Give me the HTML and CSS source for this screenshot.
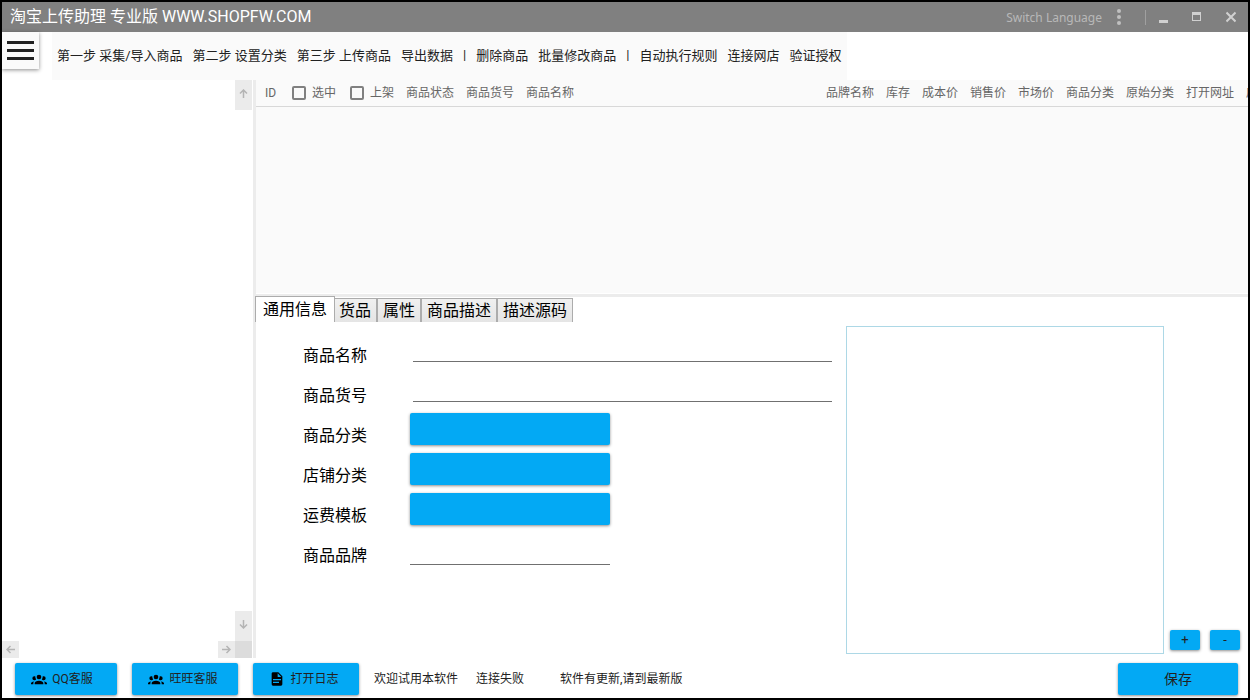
FILE: index.html
```html
<!DOCTYPE html>
<html lang="zh-CN">
<head>
<meta charset="utf-8">
<title>淘宝上传助理 专业版</title>
<link rel="stylesheet" href="styles.css">
</head>
<body>
<div class="window">
  <header class="titlebar">
    <h1 class="title">淘宝上传助理 专业版 WWW.SHOPFW.COM</h1>
    <button class="language">Switch Language</button>
    <button class="caption more" aria-label="更多"><svg width="6" height="18" viewBox="0 0 6 18"><g fill="#c0c0c0"><circle cx="3" cy="3" r="2"/><circle cx="3" cy="9" r="2"/><circle cx="3" cy="15" r="2"/></g></svg></button>
    <span class="divider"></span>
    <button class="caption" aria-label="最小化"><svg width="10" height="12" viewBox="0 0 10 12"><path d="M1 9h9v3H1z" fill="#d0d0d0"/></svg></button>
    <button class="caption" aria-label="最大化"><svg width="10" height="12" viewBox="0 0 10 12"><path d="M0 1h9v9H0zM1 4v5h7V4z" fill="#d0d0d0" fill-rule="evenodd"/></svg></button>
    <button class="caption" aria-label="关闭"><svg width="10" height="12" viewBox="0 0 10 12"><path d="M0.500 1.500l9 9M9.500 1.500l-9 9" stroke="#d0d0d0" stroke-width="2" fill="none"/></svg></button>
  </header>

  <div class="toolbar">
    <button class="hamburger" aria-label="菜单"><svg width="27" height="19" viewBox="0 0 27 19"><path d="M0 0h27v3H0zM0 8h27v3H0zM0 16h27v3H0z" fill="#212121"/></svg></button>
    <nav class="menu">
      <button>第一步 采集/导入商品</button>
      <button>第二步 设置分类</button>
      <button>第三步 上传商品</button>
      <button>导出数据</button>
      <span>|</span>
      <button>删除商品</button>
      <button>批量修改商品</button>
      <span>|</span>
      <button>自动执行规则</button>
      <button>连接网店</button>
      <button>验证授权</button>
    </nav>
  </div>

  <main class="main">
    <aside class="tree">
      <div class="tree-body"></div>
      <div class="vbar">
        <button class="arrow tall" aria-label="向上"><svg width="9" height="9" viewBox="0 0 9 9"><path d="M4.500 9V1M1 4.500L4.500 1L8 4.500"/></svg></button>
        <button class="arrow tall" aria-label="向下"><svg width="9" height="9" viewBox="0 0 9 9"><path d="M4.500 0v8M1 4.500L4.500 8L8 4.500"/></svg></button>
      </div>
      <div class="hbar">
        <button class="arrow" aria-label="向左"><svg width="9" height="9" viewBox="0 0 9 9"><path d="M9 4.500H1M4.500 1L1 4.500L4.500 8"/></svg></button>
        <button class="arrow" aria-label="向右"><svg width="9" height="9" viewBox="0 0 9 9"><path d="M0 4.500h8M4.500 1L8 4.500L4.500 8"/></svg></button>
      </div>
      <div class="corner"></div>
    </aside>

    <section class="content">
      <div class="grid-pane">
        <table class="products">
          <colgroup>
            <col class="c-id"><col class="c-pick"><col class="c-shelf"><col class="c-four"><col class="c-four"><col>
            <col class="c-four"><col class="c-two"><col class="c-three"><col class="c-three"><col class="c-three">
            <col class="c-four"><col class="c-four"><col class="c-four"><col class="c-four">
          </colgroup>
          <thead>
            <tr>
              <th class="first">ID</th>
              <th><label class="check"><input type="checkbox">选中</label></th>
              <th><label class="check"><input type="checkbox">上架</label></th>
              <th>商品状态</th><th>商品货号</th><th>商品名称</th>
              <th>品牌名称</th><th>库存</th><th>成本价</th><th>销售价</th><th>市场价</th>
              <th>商品分类</th><th>原始分类</th><th>打开网址</th><th>店铺分类</th>
            </tr>
          </thead>
        </table>
      </div>

      <div class="tabs" role="tablist">
        <button class="tab active" role="tab" aria-selected="true">通用信息</button>
        <button class="tab" role="tab">货品</button>
        <button class="tab" role="tab">属性</button>
        <button class="tab" role="tab">商品描述</button>
        <button class="tab" role="tab">描述源码</button>
      </div>

      <div class="detail">
        <form class="form">
          <label for="name">商品名称</label><input class="line wide" id="name" type="text">
          <label for="number">商品货号</label><input class="line wide" id="number" type="text">
          <label for="category">商品分类</label><button class="raised" id="category" type="button"></button>
          <label for="shop">店铺分类</label><button class="raised" id="shop" type="button"></button>
          <label for="freight">运费模板</label><button class="raised" id="freight" type="button"></button>
          <label for="brand">商品品牌</label><input class="line" id="brand" type="text">
        </form>
        <div class="preview"></div>
        <div class="zoom">
          <button class="raised small">+</button>
          <button class="raised small">-</button>
        </div>
      </div>
    </section>
  </main>

  <footer class="footer">
    <button class="raised action qq"><svg width="16" height="16" viewBox="0 0 24 24"><path d="M12 5.500A3.500 3.500 0 0 1 15.500 9a3.500 3.500 0 0 1-3.500 3.500A3.500 3.500 0 0 1 8.500 9 3.500 3.500 0 0 1 12 5.500M5 8c.56 0 1.080.15 1.530.42-.15 1.430.27 2.850 1.130 3.960C7.160 13.340 6.160 14 5 14a3 3 0 0 1-3-3 3 3 0 0 1 3-3m14 0a3 3 0 0 1 3 3 3 3 0 0 1-3 3c-1.160 0-2.160-.66-2.660-1.620a5.540 5.540 0 0 0 1.130-3.960c.45-.27.97-.42 1.530-.42M5.500 18.250c0-2.070 2.910-3.750 6.500-3.750s6.500 1.680 6.500 3.750V20h-13v-1.750M0 20v-1.500c0-1.390 1.890-2.560 4.450-2.900-.59.68-.95 1.620-.95 2.650V20H0m24 0h-3.500v-1.750c0-1.030-.36-1.970-.95-2.650 2.560.34 4.450 1.510 4.450 2.900V20z"/></svg>QQ客服</button>
    <button class="raised action"><svg width="16" height="16" viewBox="0 0 24 24"><path d="M12 5.500A3.500 3.500 0 0 1 15.500 9a3.500 3.500 0 0 1-3.500 3.500A3.500 3.500 0 0 1 8.500 9 3.500 3.500 0 0 1 12 5.500M5 8c.56 0 1.080.15 1.530.42-.15 1.430.27 2.850 1.130 3.960C7.160 13.340 6.160 14 5 14a3 3 0 0 1-3-3 3 3 0 0 1 3-3m14 0a3 3 0 0 1 3 3 3 3 0 0 1-3 3c-1.160 0-2.160-.66-2.660-1.620a5.540 5.540 0 0 0 1.130-3.960c.45-.27.97-.42 1.530-.42M5.500 18.250c0-2.070 2.910-3.750 6.500-3.750s6.500 1.680 6.500 3.750V20h-13v-1.750M0 20v-1.500c0-1.390 1.890-2.560 4.450-2.900-.59.68-.95 1.620-.95 2.650V20H0m24 0h-3.500v-1.750c0-1.030-.36-1.970-.95-2.650 2.560.34 4.450 1.510 4.450 2.900V20z"/></svg>旺旺客服</button>
    <button class="raised action"><svg width="16" height="16" viewBox="0 0 24 24"><path d="M13 9h5.500L13 3.500V9M6 2h8l6 6v12a2 2 0 0 1-2 2H6a2 2 0 0 1-2-2V4c0-1.110.89-2 2-2m9 16v-2H6v2h9m3-4v-2H6v2h12z"/></svg>打开日志</button>
    <p class="status"><span>欢迎试用本软件</span><span>连接失败</span><span class="update">软件有更新,请到最新版</span></p>
    <button class="raised save">保存</button>
  </footer>
</div>
</body>
</html>
```
FILE: styles.css
```css
* {
  box-sizing: border-box;
}

body {
  margin: 0;
  font-family: Roboto, "Noto Sans CJK SC", sans-serif;
  color: #212121;
}

button,
input {
  font: inherit;
  color: inherit;
  margin: 0;
  padding: 0;
  border: 0;
  background: none;
}

.window {
  display: flex;
  flex-direction: column;
  min-height: 100vh;
  border: 2px solid #000;
  background: #fff;
}

/* Title bar */
.titlebar {
  display: flex;
  align-items: center;
  height: 30px;
  padding-left: 8px;
  background: #808080;
}

.title {
  flex: 1;
  margin: 0;
  font-size: 16px;
  font-weight: 400;
  line-height: 30px;
  color: #fff;
}

.language {
  font-family: "Noto Sans", sans-serif;
  font-size: 12px;
  color: #b8b8b8;
}

.caption {
  display: flex;
  align-items: center;
  justify-content: center;
  width: 34px;
  height: 30px;
}

.more {
  width: 33px;
}

.divider {
  width: 1px;
  height: 15px;
  margin-left: 10px;
  background: #a0a0a0;
}

/* Toolbar */
.toolbar {
  display: flex;
  align-items: flex-start;
  gap: 13px;
  height: 48px;
}

.hamburger {
  display: flex;
  align-items: center;
  justify-content: center;
  width: 37px;
  height: 37px;
  background: #fafafa;
  box-shadow: 0 1px 4px rgba(0, 0, 0, 0.45);
}

.menu {
  display: flex;
  align-items: center;
  gap: 10px;
  height: 48px;
  padding: 0 5px 4px;
  background: #fafafa;
  font-size: 13px;
  white-space: nowrap;
}

/* Main area */
.main {
  display: flex;
  flex: 1;
}

.tree {
  display: grid;
  grid-template-columns: 1fr 17px;
  grid-template-rows: 1fr 17px;
  width: 254px;
  padding-right: 1px;
  border-right: 3px solid #ececec;
}

.vbar {
  display: flex;
  flex-direction: column;
  justify-content: space-between;
}

.hbar {
  display: flex;
  justify-content: space-between;
}

.corner {
  background: #dcdcdc;
}

.arrow {
  display: flex;
  align-items: center;
  justify-content: center;
  width: 17px;
  height: 17px;
  background: #ebebeb;
}

.tall {
  height: 30px;
  padding-bottom: 4px;
}

.arrow path {
  fill: none;
  stroke: #b4b4b4;
  stroke-width: 1.5;
}

.content {
  display: flex;
  flex: 1;
  flex-direction: column;
  min-width: 0;
}

/* Product grid */
.grid-pane {
  height: 217px;
  padding-bottom: 1px;
  overflow: hidden;
  border-bottom: 3px solid #ececec;
  background: #fafafa content-box;
}

.products {
  width: calc(100% + 52px);
  table-layout: fixed;
  border-collapse: separate;
  border-spacing: 0;
  font-size: 12px;
  line-height: 18px;
  color: #666;
}

.products th {
  height: 27px;
  padding: 0 6px;
  border-bottom: 1px solid #d8d8d8;
  font-weight: 400;
  text-align: left;
  vertical-align: middle;
  white-space: nowrap;
}

.products .first {
  padding-left: 9px;
}

.c-id { width: 30px; }
.c-pick { width: 58px; }
.c-shelf { width: 56px; }
.c-two { width: 36px; }
.c-three { width: 48px; }
.c-four { width: 60px; }

.check {
  display: flex;
  align-items: center;
  gap: 6px;
}

.check input {
  flex: none;
  width: 14px;
  height: 14px;
  appearance: none;
  border: 2px solid #808080;
  border-radius: 2px;
}

/* Tabs */
.tabs {
  display: flex;
  align-items: flex-end;
  height: 26px;
  margin: -1px 0 0 -1px;
  font-size: 16px;
  line-height: 22px;
  color: #000;
}

.tab {
  height: 24px;
  padding: 0 5px;
  border: 1px solid #acacac;
  border-bottom: 0;
  background: linear-gradient(#f0f0f0, #e5e5e5);
}

.tab.active {
  z-index: 1;
  height: 26px;
  margin-right: -2px;
  padding: 0 7px;
  background: #fff;
}

/* Detail form */
.detail {
  display: flex;
  flex: 1;
  padding: 4px 8px 4px 47px;
}

.form {
  display: grid;
  flex: 1;
  grid-template-columns: 107px 1fr;
  grid-auto-rows: 40px;
  align-items: start;
  margin-right: 14px;
  padding-top: 7px;
  color: #000;
}

.form label {
  padding-top: 12px;
  font-size: 16px;
  line-height: 22px;
}

.line {
  width: 200px;
  height: 32px;
  border-bottom: 1px solid #707070;
}

.line.wide {
  justify-self: stretch;
  width: auto;
  height: 29px;
  margin-left: 3px;
}

.raised {
  width: 200px;
  height: 32px;
  border-radius: 2px;
  background: #03a9f4;
  box-shadow: 0 1px 3px rgba(0, 0, 0, 0.45);
}

.preview {
  width: 318px;
  border: 1px solid #add8e6;
}

.zoom {
  display: flex;
  align-items: flex-end;
  gap: 10px;
  padding: 0 0 4px 6px;
}

.raised.small {
  width: 30px;
  height: 20px;
  font-size: 13px;
  line-height: 20px;
}

/* Footer */
.footer {
  display: flex;
  align-items: center;
  gap: 15px;
  height: 40px;
  padding: 2px 10px 0 13px;
  font-size: 12px;
  line-height: 16px;
}

.raised.action {
  display: flex;
  align-items: center;
  justify-content: center;
  gap: 5px;
  width: 106px;
  padding-right: 4px;
}

.raised.qq {
  width: 102px;
  padding-right: 8px;
}

.status {
  display: flex;
  flex: 1;
  gap: 18px;
  margin: 0;
}

.update {
  margin-left: 18px;
}

.raised.save {
  width: 120px;
  font-size: 14px;
}
```
